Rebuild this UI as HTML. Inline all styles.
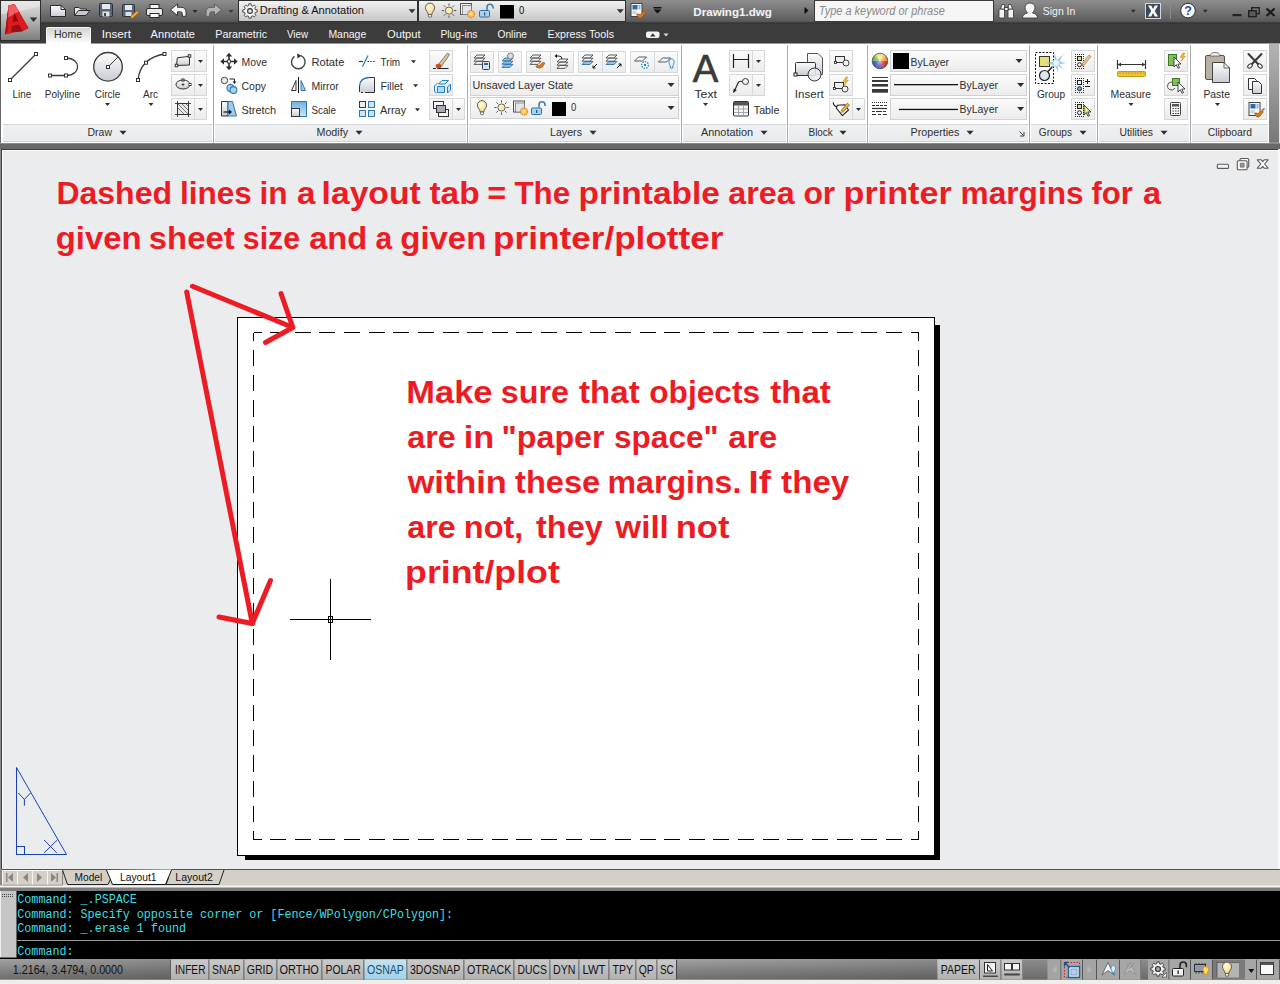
<!DOCTYPE html>
<html lang="en">
<head>
<meta charset="utf-8">
<title>Drawing1.dwg</title>
<style>
*{box-sizing:border-box;margin:0;padding:0}
html,body{width:1280px;height:984px;overflow:hidden;background:#ebecee}
body{position:relative;font-family:"Liberation Sans",sans-serif;font-size:11px;color:#333}
.abs{position:absolute}
#app{position:absolute;left:0;top:0;width:1280px;height:984px;overflow:hidden}
.t{position:absolute;white-space:nowrap;line-height:14px;height:14px;font-size:11px;color:#3a3a3a}
.tc{transform:translateX(-50%)}
svg{position:absolute;overflow:visible}
/* title */
#title{left:0;top:0;width:1280px;height:23px;background:linear-gradient(#747474 0,#6a6a6a 3px,#505050 14px,#3e3e3e 22px,#3c3c3c 23px)}
#tabs{left:0;top:23px;width:1280px;height:20px;background:#3c3c3c}
.tab{position:absolute;top:28px;color:#fff;font-size:11px;line-height:14px;white-space:nowrap}
#ribbon{left:0;top:43px;width:1280px;height:100px;background:#7c7c7c}
.panel{position:absolute;top:0;height:99px;background:#fff}
.plabel{position:absolute;left:0;right:0;top:81px;height:17px;background:linear-gradient(#eef0f2,#e6e8ea);border-top:1px solid #d9dbdd;border-bottom:1px solid #d9dbdd}
.sep{position:absolute;top:0;width:1px;height:99px;background:#b9bcc0}
.sb{position:absolute;border:1px solid #d3d5d8;background:linear-gradient(#fafafa,#ededee)}
.dd{position:absolute;border:1px solid #cfd1d4;background:linear-gradient(#f6f6f7,#ececed)}
.arr{position:absolute;width:0;height:0;border-left:3.5px solid transparent;border-right:3.5px solid transparent;border-top:4px solid #3a3a3a}
.arrs{position:absolute;width:0;height:0;border-left:3px solid transparent;border-right:3px solid transparent;border-top:3px solid #3a3a3a}
</style>
</head>
<body>
<div id="app">
<!-- TITLE BAR + RIBBON -->
<svg id="top" width="1280" height="149" viewBox="0 0 1280 149" style="left:0;top:0" font-family="'Liberation Sans',sans-serif">
<defs>
<linearGradient id="gt" x1="0" y1="0" x2="0" y2="1"><stop offset="0" stop-color="#8e8e8e"/><stop offset=".45" stop-color="#767676"/><stop offset=".88" stop-color="#5e5e5e"/><stop offset="1" stop-color="#4c4c4c"/></linearGradient>
<linearGradient id="gb" x1="0" y1="0" x2="0" y2="1"><stop offset="0" stop-color="#fbfbfb"/><stop offset="1" stop-color="#ececed"/></linearGradient>
<linearGradient id="gd" x1="0" y1="0" x2="0" y2="1"><stop offset="0" stop-color="#f3f3f3"/><stop offset="1" stop-color="#c6c6c6"/></linearGradient>
<linearGradient id="gl" x1="0" y1="0" x2="0" y2="1"><stop offset="0" stop-color="#eff0f2"/><stop offset="1" stop-color="#e9ebed"/></linearGradient>
<linearGradient id="gh" x1="0" y1="0" x2="0" y2="1"><stop offset="0" stop-color="#d2d2d2"/><stop offset="1" stop-color="#ffffff"/></linearGradient>
<linearGradient id="gapp" x1="0" y1="0" x2="0" y2="1"><stop offset="0" stop-color="#e4e4e4"/><stop offset=".45" stop-color="#b9b9b9"/><stop offset="1" stop-color="#7d7d7d"/></linearGradient>
<linearGradient id="gsh" x1="0" y1="0" x2="0" y2="1"><stop offset="0" stop-color="#fdfdfd"/><stop offset="1" stop-color="#c9ccd2"/></linearGradient>
<linearGradient id="gblue" x1="0" y1="0" x2="0" y2="1"><stop offset="0" stop-color="#6fb0dc"/><stop offset="1" stop-color="#cfe6f5"/></linearGradient>
<radialGradient id="gbulb" cx=".4" cy=".35" r=".7"><stop offset="0" stop-color="#fffbe0"/><stop offset="1" stop-color="#f3d679"/></radialGradient>
<radialGradient id="gsun" cx=".5" cy=".5" r=".6"><stop offset="0" stop-color="#fff2a8"/><stop offset="1" stop-color="#f39a1e"/></radialGradient>
</defs>
<rect x="0" y="0" width="1280" height="23" fill="url(#gt)"/>
<rect x="0" y="23" width="1280" height="21" fill="#3c3c3c"/>
<rect x="0" y="22.500" width="1280" height="1" fill="#303030"/>
<rect x="0" y="44" width="1280" height="99" fill="#fff"/>
<rect x="0" y="43" width="1280" height="1" fill="#9a9a9a"/>
<rect x="0" y="44" width="1" height="99" fill="#6a6a6a"/>
<rect x="1269" y="44" width="11" height="99" fill="#8e8e8e"/>
<rect x="0" y="143" width="1280" height="6" fill="#686868"/>
<rect x="0" y="143" width="1280" height="1" fill="#8a8a8a"/>
<rect x="0.5" y="0.5" width="40" height="40" fill="url(#gapp)" stroke="#2e2e2e"/>
<path d="M1 14 Q20 12 40 6 V1 H1 Z" fill="#ededed" opacity=".55"/>
<path d="M8.500 5.500 L14.500 4 L28.500 28 L22 31.500 L13 32.500 L5 34.500 Z" fill="#9c0e13"/>
<path d="M8.500 5.500 L14.500 4 L28.500 28 L22.300 30.800 L19.300 24.500 L12 26 L11.300 33 L5 34.500 Z" fill="#dc1a20"/>
<path d="M8.500 5.500 L14.500 4 L19 11.500 L8 17.500 Z" fill="#ee6064"/>
<path d="M14.300 12.500 L18.200 21 L12.600 22 Z" fill="#8e0b10"/>
<path d="M5 34.500 L7 19 L8.300 8 L8 31 Z" fill="#b01217"/>
<path d="M29.75 17.55 h7.5 l-3.75 4.5 z" fill="#2f2f2f"/>
<path d="M50.500 5.500 H61 L65.500 9.500 V16.500 H50.500 Z" fill="url(#gsh)" stroke="#2b2b2b"/><path d="M61 5.500 V9.500 H65.500" fill="none" stroke="#2b2b2b"/>
<path d="M74.500 15.500 V7.500 H79 L80.500 9 H86.500 V11" fill="#e8e8e8" stroke="#2b2b2b"/><path d="M74.500 15.500 L78.500 10.500 H90 L86 15.500 Z" fill="#c4c8d0" stroke="#2b2b2b"/>
<rect x="99.5" y="3.5" width="13" height="13" rx="1" fill="#5b6777" stroke="#2a323c"/><rect x="102" y="4" width="8" height="5" fill="#e6e9ee"/><rect x="102.5" y="11.500" width="7" height="5" fill="#dfe3e8"/><rect x="104" y="13" width="2" height="3" fill="#3a4552"/>
<rect x="122.5" y="4.500" width="12" height="12" rx="1" fill="#5b6777" stroke="#2a323c"/><rect x="125" y="5" width="7" height="5" fill="#e6e9ee"/><rect x="125.5" y="12" width="6" height="4" fill="#dfe3e8"/><path d="M130 17 L137 10.500 L139 12.500 L132.500 18.500 Z" fill="#f0a830" stroke="#7a4a10" stroke-width=".6"/>
<rect x="150" y="4.500" width="9" height="5" fill="#f4f4f4" stroke="#2b2b2b"/><rect x="146.500" y="8.500" width="16" height="7" rx="1.500" fill="#e9e9e9" stroke="#2b2b2b"/><rect x="150" y="13.500" width="9" height="4" fill="#fff" stroke="#2b2b2b"/>
<path d="M170.500 9.800 L177.500 4 V7.300 H181 Q186 7.300 186 12.500 V16.300 H182.300 V13.500 Q182.300 11.800 180.500 11.800 H177.500 V15.500 Z" fill="#f6f6f6" stroke="#2b2b2b" stroke-width=".9" stroke-linejoin="round"/>
<path d="M192.5 10.0 h5 l-2.5 3 z" fill="#2a2a2a"/>
<path d="M221.500 9.800 L214.500 4 V7.300 H211 Q206 7.300 206 12.500 V16.300 H209.700 V13.500 Q209.700 11.800 211.500 11.800 H214.500 V15.500 Z" fill="#b4b4b4" stroke="#585858" stroke-width=".9" stroke-linejoin="round"/>
<path d="M228.5 10.0 h5 l-2.5 3 z" fill="#3a3a3a"/>
<rect x="238.500" y="0.500" width="179" height="21" fill="url(#gd)" stroke="#2f2f2f"/>
<path d="M255.45 9.69 L257.21 9.86 L257.21 12.14 L255.45 12.31 L254.77 13.93 L255.91 15.29 L254.29 16.91 L252.93 15.77 L251.31 16.45 L251.14 18.21 L248.86 18.21 L248.69 16.45 L247.07 15.77 L245.71 16.91 L244.09 15.29 L245.23 13.93 L244.55 12.31 L242.79 12.14 L242.79 9.86 L244.55 9.69 L245.23 8.07 L244.09 6.71 L245.71 5.09 L247.07 6.23 L248.69 5.55 L248.86 3.79 L251.14 3.79 L251.31 5.55 L252.93 6.23 L254.29 5.09 L255.91 6.71 L254.77 8.07 Z" fill="#f6f6f6" stroke="#3a3a3a" stroke-width="0.9" stroke-linejoin="round"/><circle cx="250" cy="11" r="2.400" fill="#e2e2e2" stroke="#333" stroke-width="1.100"/>
<text x="259.7" y="14.1" textLength="104.3" lengthAdjust="spacingAndGlyphs" font-size="11" fill="#111" >Drafting &amp; Annotation</text>
<path d="M408.5 9.3 h7 l-3.5 4 z" fill="#333"/>
<rect x="418.500" y="0.500" width="207" height="21" fill="url(#gd)" stroke="#2f2f2f"/>
<path d="M428.2 14.5 C428.2 12 425.4 10.8 425.4 7.7 A4.600 4.600 0 1 1 434.6 7.7 C434.6 10.8 431.8 12 431.8 14.5 Z" fill="url(#gbulb)" stroke="#4f4f4f" stroke-width=".9"/><rect x="428.4" y="14.5" width="3.200" height="2.600" rx="1" fill="#f0f0f0" stroke="#444" stroke-width=".8"/>
<g stroke="#444" stroke-width=".9"><line x1="453.90" y1="10.60" x2="456.20" y2="10.60"/><line x1="452.46" y1="14.06" x2="454.09" y2="15.69"/><line x1="449.00" y1="15.50" x2="449.00" y2="17.80"/><line x1="445.54" y1="14.06" x2="443.91" y2="15.69"/><line x1="444.10" y1="10.60" x2="441.80" y2="10.60"/><line x1="445.54" y1="7.14" x2="443.91" y2="5.51"/><line x1="449.00" y1="5.70" x2="449.00" y2="3.40"/><line x1="452.46" y1="7.14" x2="454.09" y2="5.51"/></g><circle cx="449" cy="10.6" r="3.6" fill="#fdf0b0" stroke="#555" stroke-width=".9"/>
<rect x="460.5" y="3.5" width="11" height="11" fill="#f3f3f3" stroke="#555"/><rect x="462.5" y="5.5" width="9" height="9" fill="#e4e6ea" stroke="#777" stroke-width=".8"/><circle cx="471" cy="14" r="3.600" fill="url(#gsun)" stroke="#e8861a" stroke-width="1.200" stroke-dasharray="1.200 .9"/>
<path d="M487 10 v-2.800 a3 3 0 0 1 6 0 v1.200" fill="none" stroke="#3d7fb5" stroke-width="1.600"/><rect x="479.5" y="10.5" width="10" height="6.500" rx="1" fill="#a9d3ee" stroke="#2f6f9f"/><rect x="484" y="12.5" width="1.300" height="3" fill="#245a85"/>
<rect x="500" y="5" width="14" height="13.500" fill="#000"/>
<text x="519" y="14.1" textLength="5.3" lengthAdjust="spacingAndGlyphs" font-size="11" fill="#111" >0</text>
<path d="M616.8 9.3 h7 l-3.5 4 z" fill="#333"/>
<rect x="631.0" y="3.5" width="11" height="13" fill="#f7f7f7" stroke="#444"/><rect x="632.5" y="5" width="5" height="4.500" fill="#2f66b3"/><rect x="638.5" y="5" width="2" height="4.500" fill="#9ab4d6"/><rect x="632.5" y="11" width="4" height="3" fill="#c9d4e4"/><path d="M636.5 14 l4 .3 l3.500 -2.800 l1.500 1.200 l-3 3.800 q-2 2.500 -4 1.300 z" fill="#d97a1c" stroke="#8c4a0c" stroke-width=".6"/><path d="M644.0 11.5 l2.500 -2" stroke="#b5651d" stroke-width="1.600"/>
<rect x="653.500" y="7" width="8" height="1.500" fill="#111"/><path d="M653.5 9.5 h8 l-4.0 4 z" fill="#111"/>
<text x="693.3" y="16" textLength="78.6" lengthAdjust="spacingAndGlyphs" font-size="11" fill="#f4f4f4" font-weight="bold">Drawing1.dwg</text>
<path d="M804.500 7 L808.500 10.500 L804.500 14 Z" fill="#0c0c0c"/>
<rect x="814.500" y="0.500" width="179" height="21" fill="#f6f6f6" stroke="#3a3a3a"/>
<text x="818.8" y="15.4" textLength="126.0" lengthAdjust="spacingAndGlyphs" font-size="12" fill="#8a8a8a" font-style="italic">Type a keyword or phrase</text>
<g fill="#f2f2f2" stroke="#333" stroke-width=".8"><rect x="999" y="9" width="5.500" height="9" rx="1.200"/><rect x="1008" y="9" width="5.500" height="9" rx="1.200"/><path d="M1000.500 9 l1.500 -4.500 h2.500 l.5 4.500 z M1008 9 l.5 -4.500 h2.500 l1.500 4.500 z"/><rect x="1004.500" y="7.500" width="3.500" height="3" /></g>
<g fill="#f4f4f4" stroke="#333" stroke-width=".8"><path d="M1022.500 18 q0 -4 5 -5 l-1 -1.500 q-1.500 -1.500 -1.500 -4 a5 4.500 0 0 1 10 0 q0 2.500 -1.500 4 l-1 1.500 q5 1 5 5 z"/></g>
<text x="1042.8" y="14.5" textLength="32.5" lengthAdjust="spacingAndGlyphs" font-size="11" fill="#f2f2f2" >Sign In</text>
<path d="M1130.8 9.8 h5 l-2.5 3 z" fill="#2d2d2d"/>
<rect x="1145.500" y="3.500" width="15" height="15" fill="#3b4a5c" stroke="#d8d8d8"/><path d="M1148 5.500 h3.200 l1.800 3.500 l1.800 -3.500 h3.200 l-3.300 5.500 l3.300 5.500 h-3.200 l-1.800 -3.500 l-1.800 3.500 h-3.200 l3.300 -5.500 z" fill="#fff"/>
<rect x="1170" y="3" width="1" height="16" fill="#8a8a8a"/>
<circle cx="1188" cy="10.600" r="7.300" fill="#fafafa" stroke="#2d2d2d"/>
<text x="1188" y="15" text-anchor="middle" font-size="12.500" font-weight="bold" fill="#1e4fa8">?</text>
<path d="M1202.8 9.8 h5 l-2.5 3 z" fill="#2d2d2d"/>
<rect x="1232.500" y="14" width="9" height="2.200" fill="#222"/>
<g fill="none" stroke="#222" stroke-width="1.400"><rect x="1251.700" y="7.700" width="7.500" height="6"/><rect x="1248.700" y="10.700" width="7.500" height="6" fill="#5a5a5a"/></g>
<path d="M1266.500 8.500 L1274.500 16 M1274.500 8.500 L1266.500 16" stroke="#1d1d1d" stroke-width="2.300" fill="none"/>
<path d="M46 44 V29 Q46 27 48 27 H89 Q91 27 91 29 V44 Z" fill="url(#gh)"/><path d="M46.500 43.500 V29 Q46.500 27.500 48 27.500 H89 Q90.500 27.500 90.500 29 V43.500" fill="none" stroke="#f6f6f6" stroke-width="1"/>
<text x="54" y="37.5" textLength="28" lengthAdjust="spacingAndGlyphs" font-size="11" fill="#2c2c2c" >Home</text>
<text x="101.7" y="37.5" textLength="29.3" lengthAdjust="spacingAndGlyphs" font-size="11" fill="#f6f6f6" >Insert</text>
<text x="150.6" y="37.5" textLength="44.4" lengthAdjust="spacingAndGlyphs" font-size="11" fill="#f6f6f6" >Annotate</text>
<text x="215.3" y="37.5" textLength="51.7" lengthAdjust="spacingAndGlyphs" font-size="11" fill="#f6f6f6" >Parametric</text>
<text x="287" y="37.5" textLength="21" lengthAdjust="spacingAndGlyphs" font-size="11" fill="#f6f6f6" >View</text>
<text x="328.4" y="37.5" textLength="37.9" lengthAdjust="spacingAndGlyphs" font-size="11" fill="#f6f6f6" >Manage</text>
<text x="387" y="37.5" textLength="33.6" lengthAdjust="spacingAndGlyphs" font-size="11" fill="#f6f6f6" >Output</text>
<text x="440.5" y="37.5" textLength="37.0" lengthAdjust="spacingAndGlyphs" font-size="11" fill="#f6f6f6" >Plug-ins</text>
<text x="497.5" y="37.5" textLength="29.5" lengthAdjust="spacingAndGlyphs" font-size="11" fill="#f6f6f6" >Online</text>
<text x="547.5" y="37.5" textLength="66.5" lengthAdjust="spacingAndGlyphs" font-size="11" fill="#f6f6f6" >Express Tools</text>
<rect x="646" y="31.500" width="13.500" height="6.500" rx="2" fill="#f2f2f2"/><path d="M650 36.500 l2.800 -3.200 l2.800 3.200 z" fill="#333"/>
<path d="M663.5 33.5 h5 l-2.5 3 z" fill="#dcdcdc"/>
<!-- RIBBON PANELS -->
<rect x="3" y="124" width="209" height="17.500" fill="url(#gl)"/>
<rect x="3" y="124" width="209" height="1" fill="#d4d6d9"/>
<rect x="3" y="141" width="209" height="1" fill="#d0d2d5"/>
<rect x="215" y="124" width="251" height="17.500" fill="url(#gl)"/>
<rect x="215" y="124" width="251" height="1" fill="#d4d6d9"/>
<rect x="215" y="141" width="251" height="1" fill="#d0d2d5"/>
<rect x="469" y="124" width="211" height="17.500" fill="url(#gl)"/>
<rect x="469" y="124" width="211" height="1" fill="#d4d6d9"/>
<rect x="469" y="141" width="211" height="1" fill="#d0d2d5"/>
<rect x="683" y="124" width="103" height="17.500" fill="url(#gl)"/>
<rect x="683" y="124" width="103" height="1" fill="#d4d6d9"/>
<rect x="683" y="141" width="103" height="1" fill="#d0d2d5"/>
<rect x="789" y="124" width="77" height="17.500" fill="url(#gl)"/>
<rect x="789" y="124" width="77" height="1" fill="#d4d6d9"/>
<rect x="789" y="141" width="77" height="1" fill="#d0d2d5"/>
<rect x="869" y="124" width="159" height="17.500" fill="url(#gl)"/>
<rect x="869" y="124" width="159" height="1" fill="#d4d6d9"/>
<rect x="869" y="141" width="159" height="1" fill="#d0d2d5"/>
<rect x="1031" y="124" width="65" height="17.500" fill="url(#gl)"/>
<rect x="1031" y="124" width="65" height="1" fill="#d4d6d9"/>
<rect x="1031" y="141" width="65" height="1" fill="#d0d2d5"/>
<rect x="1099" y="124" width="90" height="17.500" fill="url(#gl)"/>
<rect x="1099" y="124" width="90" height="1" fill="#d4d6d9"/>
<rect x="1099" y="141" width="90" height="1" fill="#d0d2d5"/>
<rect x="1192" y="124" width="76" height="17.500" fill="url(#gl)"/>
<rect x="1192" y="124" width="76" height="1" fill="#d4d6d9"/>
<rect x="1192" y="141" width="76" height="1" fill="#d0d2d5"/>
<rect x="213" y="45" width="1" height="98" fill="#a9acb0"/>
<rect x="467" y="45" width="1" height="98" fill="#a9acb0"/>
<rect x="681" y="45" width="1" height="98" fill="#a9acb0"/>
<rect x="787" y="45" width="1" height="98" fill="#a9acb0"/>
<rect x="867" y="45" width="1" height="98" fill="#a9acb0"/>
<rect x="1029" y="45" width="1" height="98" fill="#a9acb0"/>
<rect x="1097" y="45" width="1" height="98" fill="#a9acb0"/>
<rect x="1190" y="45" width="1" height="98" fill="#a9acb0"/>
<defs><linearGradient id="grs" x1="0" y1="0" x2="0" y2="1"><stop offset="0" stop-color="#b4b4b4"/><stop offset="1" stop-color="#787878"/></linearGradient></defs><rect x="1269" y="44" width="10" height="98" fill="url(#grs)"/><rect x="1279" y="44" width="1" height="99" fill="#e8e8e8"/>
<text x="87.5" y="135.7" textLength="24.5" lengthAdjust="spacingAndGlyphs" font-size="11" fill="#2e2e2e" >Draw</text>
<path d="M119.5 130.7 h7 l-3.5 4 z" fill="#2e2e2e"/>
<text x="316.5" y="135.7" textLength="31.5" lengthAdjust="spacingAndGlyphs" font-size="11" fill="#2e2e2e" >Modify</text>
<path d="M355.5 130.7 h7 l-3.5 4 z" fill="#2e2e2e"/>
<text x="550" y="135.7" textLength="32" lengthAdjust="spacingAndGlyphs" font-size="11" fill="#2e2e2e" >Layers</text>
<path d="M589.5 130.7 h7 l-3.5 4 z" fill="#2e2e2e"/>
<text x="701" y="135.7" textLength="52" lengthAdjust="spacingAndGlyphs" font-size="11" fill="#2e2e2e" >Annotation</text>
<path d="M760.5 130.7 h7 l-3.5 4 z" fill="#2e2e2e"/>
<text x="808.5" y="135.7" textLength="24.3" lengthAdjust="spacingAndGlyphs" font-size="11" fill="#2e2e2e" >Block</text>
<path d="M839.5 130.7 h7 l-3.5 4 z" fill="#2e2e2e"/>
<text x="910.6" y="135.7" textLength="48.8" lengthAdjust="spacingAndGlyphs" font-size="11" fill="#2e2e2e" >Properties</text>
<path d="M966.5 130.7 h7 l-3.5 4 z" fill="#2e2e2e"/>
<text x="1038.8" y="135.7" textLength="33.2" lengthAdjust="spacingAndGlyphs" font-size="11" fill="#2e2e2e" >Groups</text>
<path d="M1079.5 130.7 h7 l-3.5 4 z" fill="#2e2e2e"/>
<text x="1119.4" y="135.7" textLength="33.6" lengthAdjust="spacingAndGlyphs" font-size="11" fill="#2e2e2e" >Utilities</text>
<path d="M1160.5 130.7 h7 l-3.5 4 z" fill="#2e2e2e"/>
<text x="1207.8" y="135.7" textLength="44.2" lengthAdjust="spacingAndGlyphs" font-size="11" fill="#2e2e2e" >Clipboard</text>
<path d="M1019.500 131.500 L1023.500 135.500 M1024 132 V136 H1020" stroke="#444" fill="none" stroke-width="1"/>
<line x1="10" y1="80" x2="36" y2="54" stroke="#3a3a3a" stroke-width="1.300"/><rect x="8.5" y="78.5" width="3" height="3" fill="#fff" stroke="#333" stroke-width="1"/><rect x="34.5" y="52.5" width="3" height="3" fill="#fff" stroke="#333" stroke-width="1"/>
<text x="12.5" y="97.7" textLength="18.7" lengthAdjust="spacingAndGlyphs" font-size="11" fill="#2e2e2e" >Line</text>
<path d="M50 75.500 H66 C81.500 75.500 81.500 58 66 58" fill="none" stroke="#3a3a3a" stroke-width="1.300"/><rect x="48.5" y="74.0" width="3" height="3" fill="#fff" stroke="#333" stroke-width="1"/><rect x="64.5" y="74.0" width="3" height="3" fill="#fff" stroke="#333" stroke-width="1"/><rect x="64.5" y="56.5" width="3" height="3" fill="#fff" stroke="#333" stroke-width="1"/>
<text x="44.8" y="97.7" textLength="35.2" lengthAdjust="spacingAndGlyphs" font-size="11" fill="#2e2e2e" >Polyline</text>
<circle cx="108" cy="66.800" r="14.300" fill="url(#gsh)" stroke="#3a3a3a" stroke-width="1.300"/><line x1="108" y1="67" x2="118" y2="57" stroke="#3a3a3a" stroke-width="1"/><rect x="106.5" y="65.5" width="3" height="3" fill="#fff" stroke="#333" stroke-width="1"/>
<text x="94.8" y="97.7" textLength="25.4" lengthAdjust="spacingAndGlyphs" font-size="11" fill="#2e2e2e" >Circle</text>
<path d="M105.0 103.0 h5 l-2.5 3 z" fill="#2e2e2e"/>
<path d="M138 80 Q140.500 58 164.500 54" fill="none" stroke="#3a3a3a" stroke-width="1.300"/><rect x="136.5" y="78.5" width="3" height="3" fill="#fff" stroke="#333" stroke-width="1"/><rect x="144.5" y="61.2" width="3" height="3" fill="#fff" stroke="#333" stroke-width="1"/><rect x="163.0" y="52.5" width="3" height="3" fill="#fff" stroke="#333" stroke-width="1"/>
<text x="143" y="97.7" textLength="15" lengthAdjust="spacingAndGlyphs" font-size="11" fill="#2e2e2e" >Arc</text>
<path d="M148.5 103.0 h5 l-2.5 3 z" fill="#2e2e2e"/>
<rect x="171.5" y="50.5" width="35" height="21" fill="url(#gb)" stroke="#d6d8da"/>
<rect x="194" y="51" width="1" height="20" fill="#d6d8da"/>
<path d="M198.0 60.0 h5 l-2.5 3 z" fill="#2e2e2e"/>
<rect x="171.5" y="74.5" width="35" height="21" fill="url(#gb)" stroke="#d6d8da"/>
<rect x="194" y="75" width="1" height="20" fill="#d6d8da"/>
<path d="M198.0 84.0 h5 l-2.5 3 z" fill="#2e2e2e"/>
<rect x="171.5" y="98.5" width="35" height="21" fill="url(#gb)" stroke="#d6d8da"/>
<rect x="194" y="99" width="1" height="20" fill="#d6d8da"/>
<path d="M198.0 108.0 h5 l-2.5 3 z" fill="#2e2e2e"/>
<path d="M176.500 65.500 L177.300 57.800 L189.500 56.300 L189.500 65 Z" fill="url(#gsh)" stroke="#333"/><rect x="175.25" y="64.25" width="2.5" height="2.5" fill="#fff" stroke="#333" stroke-width="1"/><rect x="188.25" y="54.75" width="2.5" height="2.5" fill="#fff" stroke="#333" stroke-width="1"/>
<ellipse cx="183" cy="84.500" rx="7" ry="4.500" fill="url(#gsh)" stroke="#333"/><rect x="182.0" y="79.0" width="2" height="2" fill="#fff" stroke="#333" stroke-width="1"/><rect x="189.0" y="83.5" width="2" height="2" fill="#fff" stroke="#333" stroke-width="1"/><path d="M181.500 84.500 h3 M183 83 v3" stroke="#333" stroke-width=".8"/>
<rect x="177.500" y="103.500" width="11" height="11" fill="#e9e9e9" stroke="#333"/><path d="M178 108 l6 6 M178 104 l10 10 M182 104 l6 6 M186 104 l2 2" stroke="#555" stroke-width=".8"/><path d="M175 103.500 h16 M175 114.500 h16 M177.500 101 v16 M188.500 101 v16" stroke="#333" stroke-width=".9"/>
<g stroke="#2e2e2e" stroke-width="1.600" fill="#2e2e2e"><path d="M222 61.500 H236 M229 54.500 V68.500" fill="none"/><path d="M229 52.800 l-3.200 3.700 h6.400 z M229 70.200 l-3.200 -3.700 h6.400 z M220.300 61.500 l3.700 -3.200 v6.400 z M237.700 61.500 l-3.700 -3.200 v6.400 z" stroke="none"/></g><rect x="227.500" y="60" width="3" height="3" fill="#fff" stroke="#333" stroke-width=".8"/>
<text x="241.5" y="65.7" textLength="25.5" lengthAdjust="spacingAndGlyphs" font-size="11" fill="#2e2e2e" >Move</text>
<circle cx="224.500" cy="80.500" r="3.200" fill="#eee" stroke="#444"/><path d="M229.500 79 h5 v3" fill="none" stroke="#222"/><path d="M234.500 84 l-2 -2.500 h4 z" fill="#222"/><circle cx="230.500" cy="88" r="3.600" fill="#a9cfe9" stroke="#2f78b3" stroke-width="1.100"/><circle cx="233.500" cy="90" r="3.400" fill="#a9cfe9" stroke="#2f78b3" stroke-width="1.100"/>
<text x="241.5" y="89.7" textLength="24.5" lengthAdjust="spacingAndGlyphs" font-size="11" fill="#2e2e2e" >Copy</text>
<path d="M221.500 101.500 H228 V116 H221.500 Z" fill="url(#gsh)" stroke="#333"/><path d="M228 101.500 H232.500 L236.500 116 H228 Z" fill="#9fcbe8" stroke="#2f78b3"/><path d="M223.500 112 h6" stroke="#111" stroke-width="1.200"/><path d="M232 112 l-3 -2.500 v5 z" fill="#111"/>
<text x="241.5" y="113.7" textLength="34.7" lengthAdjust="spacingAndGlyphs" font-size="11" fill="#2e2e2e" >Stretch</text>
<path d="M301 55.700 A6.800 6.800 0 1 1 294.500 56.300" fill="none" stroke="#444" stroke-width="1.400"/><path d="M297 53.500 l4.500 2.300 l-4 2.800 z" fill="#333"/>
<text x="311.5" y="65.7" textLength="32.9" lengthAdjust="spacingAndGlyphs" font-size="11" fill="#2e2e2e" >Rotate</text>
<path d="M296 90.500 H291.500 L296 80.500 Z" fill="#f3f3f3" stroke="#333"/><path d="M301 90.500 H305.500 L301 80.500 Z" fill="#9fcbe8" stroke="#2f78b3"/><path d="M298.500 77 V93" stroke="#111" stroke-width="1"/>
<text x="311.5" y="89.7" textLength="27.3" lengthAdjust="spacingAndGlyphs" font-size="11" fill="#2e2e2e" >Mirror</text>
<rect x="291.500" y="101.500" width="15" height="15" fill="url(#gblue)" stroke="#2f78b3"/><rect x="291.500" y="108.500" width="8" height="8" fill="url(#gsh)" stroke="#333"/>
<text x="311.5" y="113.7" textLength="24.5" lengthAdjust="spacingAndGlyphs" font-size="11" fill="#2e2e2e" >Scale</text>
<path d="M359 61.500 h4" stroke="#333" stroke-width="1.100"/><path d="M367.500 61.500 h8" stroke="#333" stroke-width="1.100" stroke-dasharray="1.500 1.300"/><path d="M362.500 66.500 L368 55.500" stroke="#2f78b3" stroke-width="1.300"/>
<text x="380.6" y="65.7" textLength="19.6" lengthAdjust="spacingAndGlyphs" font-size="11" fill="#2e2e2e" >Trim</text>
<path d="M411.0 60.3 h5 l-2.5 3 z" fill="#2e2e2e"/>
<path d="M359.500 92.500 V86 Q360 78 369 77.500 H374.500 V92.500 Z" fill="url(#gsh)" stroke="none"/><path d="M359.500 86 Q360 78 369 77.500" fill="none" stroke="#2f78b3" stroke-width="1.300"/><path d="M369 77.500 H374.500 V92.500 H359.500 V86" fill="none" stroke="#333" stroke-dasharray="30 2 2 2"/>
<text x="380.6" y="89.7" textLength="22.2" lengthAdjust="spacingAndGlyphs" font-size="11" fill="#2e2e2e" >Fillet</text>
<path d="M413.1 84.3 h5 l-2.5 3 z" fill="#2e2e2e"/>
<rect x="359.5" y="101.5" width="6" height="6" fill="#ececec" stroke="#3a3a3a"/>
<rect x="368.5" y="101.5" width="6" height="6" fill="#cfe4f3" stroke="#2f78b3"/>
<rect x="359.5" y="110.5" width="6" height="6" fill="#cfe4f3" stroke="#2f78b3"/>
<rect x="368.5" y="110.5" width="6" height="6" fill="#cfe4f3" stroke="#2f78b3"/>
<text x="380" y="113.7" textLength="26.2" lengthAdjust="spacingAndGlyphs" font-size="11" fill="#2e2e2e" >Array</text>
<path d="M415.0 108.3 h5 l-2.5 3 z" fill="#2e2e2e"/>
<rect x="429.5" y="50.5" width="23" height="21" fill="url(#gb)" stroke="#d6d8da"/>
<rect x="429.5" y="74.5" width="23" height="21" fill="url(#gb)" stroke="#d6d8da"/>
<rect x="429.5" y="98.5" width="35" height="21" fill="url(#gb)" stroke="#d6d8da"/>
<rect x="452" y="99" width="1" height="20" fill="#d6d8da"/>
<path d="M456.0 108.0 h5 l-2.5 3 z" fill="#2e2e2e"/>
<path d="M438 65 L447.500 53 L449.500 54.500 L441 67 Z" fill="#d8c39a" stroke="#6a5638" stroke-width=".7"/><ellipse cx="438.500" cy="66" rx="2.800" ry="2.300" fill="#c7501a"/><path d="M433 68.500 h3 M437.500 68.500 h11" stroke="#222" stroke-width="1"/>
<g stroke="#1f7fc8" stroke-width="1" stroke-linejoin="round"><path d="M434.500 91.500 v-5.500 l3 -3" fill="none"/><path d="M438.500 84 l3.500 -3.500 h6.500 l-3.500 3.500 z" fill="#e4f2fb"/><path d="M447.500 87 l3 -3 v6 l-3 3 z" fill="#cfe7f7"/><rect x="437.500" y="86.500" width="7" height="6" fill="#b5dbf3"/><path d="M434.500 91.500 l2 1.500" fill="none"/></g>
<rect x="433.500" y="101.500" width="10" height="7" fill="#f8f8f8" stroke="#333"/><rect x="438.500" y="109.500" width="10" height="7" fill="#f8f8f8" stroke="#333"/><rect x="436.500" y="105.500" width="9" height="7" fill="#a9adb3" stroke="#333"/>
<rect x="470.5" y="51.5" width="23" height="21" fill="url(#gb)" stroke="#d6d8da"/>
<rect x="498.5" y="51.5" width="23" height="21" fill="url(#gb)" stroke="#d6d8da"/>
<rect x="526.5" y="51.5" width="47" height="21" fill="url(#gb)" stroke="#d6d8da"/>
<rect x="578.5" y="51.5" width="47" height="21" fill="url(#gb)" stroke="#d6d8da"/>
<rect x="630.5" y="51.5" width="47" height="21" fill="url(#gb)" stroke="#d6d8da"/>
<rect x="550" y="51" width="1" height="21" fill="#d6d8da"/>
<rect x="602" y="51" width="1" height="21" fill="#d6d8da"/>
<rect x="654" y="51" width="1" height="21" fill="#d6d8da"/>
<path d="M474 58.0 l3 -3 h8 l-3 3 z" fill="#f4f4f4" stroke="#333" stroke-width=".8"/><path d="M474 61.2 l3 -3 h8 l-3 3 z" fill="#f4f4f4" stroke="#333" stroke-width=".8"/><path d="M474 64.4 l3 -3 h8 l-3 3 z" fill="#f4f4f4" stroke="#333" stroke-width=".8"/><rect x="482.500" y="61.500" width="7" height="8" rx="1" fill="#dbe7f3" stroke="#2a3f5c"/><rect x="484" y="63" width="4" height="2" fill="#2f66b3"/>
<path d="M502 61.0 l3 -3 h8 l-3 3 z" fill="#8cc3e8" stroke="#1d5f9c" stroke-width=".8"/><path d="M502 64.2 l3 -3 h8 l-3 3 z" fill="#8cc3e8" stroke="#1d5f9c" stroke-width=".8"/><path d="M502 67.4 l3 -3 h8 l-3 3 z" fill="#8cc3e8" stroke="#1d5f9c" stroke-width=".8"/><circle cx="510.500" cy="56" r="3" fill="#d8dde3" stroke="#666" stroke-width=".8"/>
<path d="M530 58.0 l3 -3 h8 l-3 3 z" fill="#f4f4f4" stroke="#333" stroke-width=".8"/><path d="M530 61.2 l3 -3 h8 l-3 3 z" fill="#f4f4f4" stroke="#333" stroke-width=".8"/><path d="M530 64.4 l3 -3 h8 l-3 3 z" fill="#f4f4f4" stroke="#333" stroke-width=".8"/><path d="M536 66 l4 -1 l3 -3 l2 1 l-2.500 4 q-3 2.500 -6.500 0 z" fill="#d97a1c" stroke="#8c4a0c" stroke-width=".5"/>
<path d="M557 62.0 l3 -3 h8 l-3 3 z" fill="#f4f4f4" stroke="#333" stroke-width=".8"/><path d="M557 65.2 l3 -3 h8 l-3 3 z" fill="#f4f4f4" stroke="#333" stroke-width=".8"/><path d="M557 68.4 l3 -3 h8 l-3 3 z" fill="#f4f4f4" stroke="#333" stroke-width=".8"/><path d="M556 56 h3 q3 0 3 3" fill="none" stroke="#111" stroke-width=".9"/><path d="M554.500 56 l2.500 -2 v4 z" fill="#111"/>
<path d="M582 58.0 l3 -3 h8 l-3 3 z" fill="#f8f8f8" stroke="#333" stroke-width=".8"/><path d="M582 61.2 l3 -3 h8 l-3 3 z" fill="#f8f8f8" stroke="#333" stroke-width=".8"/><path d="M582 64.500 l3 -3 h8 l-3 3 z" fill="#8cc3e8" stroke="#1d5f9c" stroke-width=".8"/><path d="M597 64 l-4 4 M593 65.500 v2.500 h2.500" stroke="#111" fill="none" stroke-width="1"/>
<path d="M606 58.0 l3 -3 h8 l-3 3 z" fill="#f8f8f8" stroke="#333" stroke-width=".8"/><path d="M606 61.2 l3 -3 h8 l-3 3 z" fill="#f8f8f8" stroke="#333" stroke-width=".8"/><path d="M606 64.500 l3 -3 h8 l-3 3 z" fill="#8cc3e8" stroke="#1d5f9c" stroke-width=".8"/><path d="M617 68 l4 -4 M618.500 64 h2.500 v2.500" stroke="#111" fill="none" stroke-width="1"/>
<path d="M634.500 61 l4 -4 h8 l-4 4 z" fill="#f8f8f8" stroke="#333" stroke-width=".8"/><circle cx="645" cy="65" r="3.300" fill="#fff" stroke="#2b7ec0" stroke-width="1.300" stroke-dasharray="1.500 1"/><circle cx="645" cy="65" r="1.200" fill="#2b7ec0"/>
<path d="M658.500 62 l4 -4 h8 l-4 4 z" fill="#f8f8f8" stroke="#333" stroke-width=".8"/><path d="M669 62.500 a2.600 2.800 0 1 1 5 0 q0 2 -1.200 3 v2.500 h-2.600 v-2.500 q-1.200 -1 -1.200 -3 z" fill="#e7f2fb" stroke="#2b7ec0" stroke-width=".9"/>
<rect x="470.5" y="75.5" width="208" height="20" fill="url(#gb)" stroke="#cfd1d4"/>
<text x="472.5" y="88.6" textLength="100.5" lengthAdjust="spacingAndGlyphs" font-size="11" fill="#2e2e2e" >Unsaved Layer State</text>
<path d="M667.5 83.0 h7 l-3.5 4 z" fill="#2e2e2e"/>
<rect x="470.5" y="97.5" width="208" height="21" fill="url(#gb)" stroke="#cfd1d4"/>
<path d="M480.2 112.0 C480.2 109.5 477.4 108.3 477.4 105.2 A4.600 4.600 0 1 1 486.6 105.2 C486.6 108.3 483.8 109.5 483.8 112.0 Z" fill="url(#gbulb)" stroke="#4f4f4f" stroke-width=".9"/><rect x="480.4" y="112.0" width="3.200" height="2.600" rx="1" fill="#f0f0f0" stroke="#444" stroke-width=".8"/>
<g stroke="#444" stroke-width=".9"><line x1="506.40" y1="107.50" x2="508.70" y2="107.50"/><line x1="504.96" y1="110.96" x2="506.59" y2="112.59"/><line x1="501.50" y1="112.40" x2="501.50" y2="114.70"/><line x1="498.04" y1="110.96" x2="496.41" y2="112.59"/><line x1="496.60" y1="107.50" x2="494.30" y2="107.50"/><line x1="498.04" y1="104.04" x2="496.41" y2="102.41"/><line x1="501.50" y1="102.60" x2="501.50" y2="100.30"/><line x1="504.96" y1="104.04" x2="506.59" y2="102.41"/></g><circle cx="501.5" cy="107.5" r="3.6" fill="#fdf0b0" stroke="#555" stroke-width=".9"/>
<rect x="513.5" y="101.0" width="11" height="11" fill="#f3f3f3" stroke="#555"/><rect x="515.5" y="103.0" width="9" height="9" fill="#e4e6ea" stroke="#777" stroke-width=".8"/><circle cx="524" cy="111.5" r="3.600" fill="url(#gsun)" stroke="#e8861a" stroke-width="1.200" stroke-dasharray="1.200 .9"/>
<path d="M539 107.5 v-2.800 a3 3 0 0 1 6 0 v1.200" fill="none" stroke="#3d7fb5" stroke-width="1.600"/><rect x="531.5" y="108.0" width="10" height="6.500" rx="1" fill="#a9d3ee" stroke="#2f6f9f"/><rect x="536" y="110.0" width="1.300" height="3" fill="#245a85"/>
<rect x="552" y="102" width="14" height="14" fill="#000"/>
<text x="571" y="110.8" textLength="5.3" lengthAdjust="spacingAndGlyphs" font-size="11" fill="#2e2e2e" >0</text>
<path d="M667.5 106.0 h7 l-3.5 4 z" fill="#2e2e2e"/>
<text x="705.500" y="82" text-anchor="middle" font-size="38" fill="#3a3a3a" stroke="#3a3a3a" stroke-width=".7" textLength="25.500" lengthAdjust="spacingAndGlyphs">A</text>
<text x="694.4" y="97.7" textLength="22.6" lengthAdjust="spacingAndGlyphs" font-size="11" fill="#2e2e2e" >Text</text>
<path d="M703.0 103.0 h5 l-2.5 3 z" fill="#2e2e2e"/>
<rect x="729.5" y="50.5" width="35" height="21" fill="url(#gb)" stroke="#d6d8da"/>
<rect x="752" y="51" width="1" height="20" fill="#d6d8da"/>
<path d="M756.0 60.0 h5 l-2.5 3 z" fill="#2e2e2e"/>
<rect x="729.5" y="74.5" width="35" height="21" fill="url(#gb)" stroke="#d6d8da"/>
<rect x="752" y="75" width="1" height="20" fill="#d6d8da"/>
<path d="M756.0 84.0 h5 l-2.5 3 z" fill="#2e2e2e"/>
<path d="M733.500 54 V68 M748.500 54 V68 M733.500 59.500 H748.500" stroke="#222" stroke-width="1.200" fill="none"/>
<path d="M734 92 L737.500 84 Q739 80.500 742.500 81.500" fill="none" stroke="#222" stroke-width="1.100"/><path d="M733 93 l.8 -4.500 l3 1.800 z" fill="#222"/><circle cx="745.500" cy="81.500" r="3" fill="#f4f4f4" stroke="#333"/>
<rect x="733.500" y="101.500" width="15" height="14.500" rx="1" fill="#f4f4f4" stroke="#333"/><rect x="734" y="102" width="14" height="3.500" fill="#555"/><path d="M738.500 105.500 V116 M743.500 105.500 V116 M734 109 H748 M734 112.500 H748" stroke="#9aa0a8" stroke-width=".9"/>
<text x="753.8" y="113.7" textLength="25.6" lengthAdjust="spacingAndGlyphs" font-size="11" fill="#2e2e2e" >Table</text>
<path d="M807.500 53.500 H818 L822.500 58 V74.500 H807.500 Z" fill="url(#gsh)" stroke="#555"/><rect x="795.500" y="62.500" width="20" height="13" rx="1" fill="url(#gsh)" stroke="#333"/><circle cx="814.500" cy="74.500" r="6.500" fill="#e9ebee" fill-opacity=".85" stroke="#333"/><rect x="794" y="73" width="3" height="3" fill="#fff" stroke="#222"/>
<text x="794.8" y="97.7" textLength="29.0" lengthAdjust="spacingAndGlyphs" font-size="11" fill="#2e2e2e" >Insert</text>
<rect x="829.5" y="50.5" width="23" height="21" fill="url(#gb)" stroke="#d6d8da"/>
<rect x="829.5" y="74.5" width="23" height="21" fill="url(#gb)" stroke="#d6d8da"/>
<rect x="829.5" y="98.5" width="35" height="21" fill="url(#gb)" stroke="#d6d8da"/>
<rect x="852" y="99" width="1" height="20" fill="#d6d8da"/>
<path d="M856.0 108.0 h5 l-2.5 3 z" fill="#2e2e2e"/>
<rect x="835.5" y="56.5" width="9" height="6" fill="#eceef1" stroke="#333"/><circle cx="846" cy="63" r="3" fill="#eef0f3" stroke="#333" stroke-width=".9"/><rect x="834.5" y="61.5" width="2" height="2" fill="#fff" stroke="#222" stroke-width=".8"/>
<rect x="834.5" y="82.5" width="9" height="6" fill="#eceef1" stroke="#333"/><circle cx="845" cy="89" r="3" fill="#eef0f3" stroke="#333" stroke-width=".9"/><rect x="833.5" y="87.5" width="2" height="2" fill="#fff" stroke="#222" stroke-width=".8"/><path d="M846 77 l-3 4.500 h2.500 l-1.500 4 l4.500 -5.500 h-2.500 l2 -3 z" fill="#f4b52a" stroke="#c07a10" stroke-width=".4"/>
<path d="M833.200 102.300 q.3 4 3.800 4.500" fill="none" stroke="#222" stroke-width="1.100"/><path d="M837.500 105.200 L845 104.800 L848.500 110 L842.400 115.600 L836.300 108 Z" fill="#fafafa" stroke="#222" stroke-width="1.100" stroke-linejoin="round"/><path d="M841.300 110.300 L847.300 103.300 L849.500 105 L843.300 112 Z" fill="#f2b134" stroke="#6a4a10" stroke-width=".6"/><path d="M841.300 110.300 L843.300 112 L840.600 113 Z" fill="#f6e2b8" stroke="#6a4a10" stroke-width=".4"/>
<defs><radialGradient id="gwh" cx=".5" cy=".5" r=".5"><stop offset="0" stop-color="#fff" stop-opacity=".55"/><stop offset=".6" stop-color="#fff" stop-opacity=".1"/><stop offset="1" stop-color="#000" stop-opacity=".15"/></radialGradient></defs><path d="M880 61 L887.80 61.00 A7.8 7.8 0 0 1 883.90 67.75 Z" fill="#e0301f"/><path d="M880 61 L883.90 67.75 A7.8 7.8 0 0 1 876.10 67.75 Z" fill="#8f4fc2"/><path d="M880 61 L876.10 67.75 A7.8 7.8 0 0 1 872.20 61.00 Z" fill="#2f62d2"/><path d="M880 61 L872.20 61.00 A7.8 7.8 0 0 1 876.10 54.25 Z" fill="#76bf43"/><path d="M880 61 L876.10 54.25 A7.8 7.8 0 0 1 883.90 54.25 Z" fill="#efe04e"/><path d="M880 61 L883.90 54.25 A7.8 7.8 0 0 1 887.80 61.00 Z" fill="#f0a02e"/><circle cx="880" cy="61" r="7.800" fill="url(#gwh)" stroke="#5a5a6a" stroke-width=".9"/><ellipse cx="880" cy="56.500" rx="5.500" ry="2.800" fill="#fff" opacity=".35"/>
<rect x="890.5" y="50.5" width="136" height="21" fill="url(#gb)" stroke="#cfd1d4"/>
<rect x="893" y="53" width="16" height="16" fill="#000"/>
<text x="910.6" y="65.7" textLength="38.4" lengthAdjust="spacingAndGlyphs" font-size="11" fill="#2e2e2e" >ByLayer</text>
<path d="M1015.5 59.0 h7 l-3.5 4 z" fill="#2e2e2e"/>
<rect x="872" y="77" width="16" height="1" fill="#3a3a3a"/><rect x="872" y="80" width="16" height="2" fill="#3a3a3a"/><rect x="872" y="84" width="16" height="2.600" fill="#3a3a3a"/><rect x="872" y="89" width="16" height="3.700" fill="#3a3a3a"/>
<rect x="890.5" y="74.5" width="136" height="21" fill="url(#gb)" stroke="#cfd1d4"/>
<rect x="894" y="84" width="64" height="1.300" fill="#111"/>
<text x="959.4" y="89" textLength="38.6" lengthAdjust="spacingAndGlyphs" font-size="11" fill="#2e2e2e" >ByLayer</text>
<path d="M1017.1 83.0 h7 l-3.5 4 z" fill="#2e2e2e"/>
<g stroke="#333" stroke-width="1.200"><path d="M872 102.500 h15" stroke-dasharray="1 1"/><path d="M872 105.500 h15" stroke-dasharray="3 1"/><path d="M872 108.500 h15"/><path d="M872 111.500 h15" stroke-dasharray="3 1 6 1 3 1"/><path d="M872 114.500 h15" stroke-dasharray="4 2 3 2 4"/></g>
<rect x="890.5" y="98.5" width="136" height="21" fill="url(#gb)" stroke="#cfd1d4"/>
<rect x="899" y="108.800" width="59" height="1.300" fill="#111"/>
<text x="959.4" y="113.4" textLength="38.6" lengthAdjust="spacingAndGlyphs" font-size="11" fill="#2e2e2e" >ByLayer</text>
<path d="M1017.1 107.0 h7 l-3.5 4 z" fill="#2e2e2e"/>
<rect x="1035.500" y="52.500" width="18" height="31" fill="none" stroke="#111" stroke-dasharray="2 1.500"/><rect x="1039.500" y="56.500" width="10" height="10" fill="#e8df7a" stroke="#333"/><circle cx="1044.500" cy="75.500" r="5" fill="#dfe6ee" stroke="#222" stroke-width="1.200"/><path d="M1048 71.500 l4.500 -5" stroke="#222" stroke-width="1.400"/>
<defs><radialGradient id="gsp"><stop offset="0" stop-color="#fff"/><stop offset=".5" stop-color="#eaf4fc" stop-opacity=".9"/><stop offset="1" stop-color="#cfe6f7" stop-opacity="0"/></radialGradient></defs><path d="M1056.20 64.45 L1066.70 63.00 L1056.20 61.55 Z" fill="#84bfeb"/><path d="M1056.20 61.55 L1045.20 63.00 L1056.20 64.45 Z" fill="#84bfeb"/><path d="M1057.31 63.93 L1063.59 54.19 L1055.09 62.07 Z" fill="#84bfeb"/><path d="M1055.09 62.07 L1051.70 68.36 L1057.31 63.93 Z" fill="#84bfeb"/><path d="M1057.63 62.75 L1054.38 52.66 L1054.77 63.25 Z" fill="#84bfeb"/><path d="M1054.77 63.25 L1057.85 72.36 L1057.63 62.75 Z" fill="#84bfeb"/><path d="M1055.27 64.11 L1063.86 69.43 L1057.13 61.89 Z" fill="#84bfeb"/><path d="M1057.13 61.89 L1051.60 59.14 L1055.27 64.11 Z" fill="#84bfeb"/><path d="M1056.70 64.36 L1061.84 60.95 L1055.70 61.64 Z" fill="#84bfeb"/><path d="M1055.70 61.64 L1050.56 65.05 L1056.70 64.36 Z" fill="#84bfeb"/><path d="M1057.60 63.38 L1057.49 58.17 L1054.80 62.62 Z" fill="#84bfeb"/><path d="M1054.80 62.62 L1054.91 67.83 L1057.60 63.38 Z" fill="#84bfeb"/><circle cx="1056.200" cy="63" r="4.500" fill="url(#gsp)"/>
<text x="1037" y="97.7" textLength="28" lengthAdjust="spacingAndGlyphs" font-size="11" fill="#2e2e2e" >Group</text>
<rect x="1071.5" y="50.5" width="23" height="21" fill="url(#gb)" stroke="#d6d8da"/>
<rect x="1071.5" y="74.5" width="23" height="21" fill="url(#gb)" stroke="#d6d8da"/>
<rect x="1071.5" y="98.5" width="23" height="21" fill="url(#gb)" stroke="#d6d8da"/>
<g fill="#333"><rect x="1075.0" y="54.0" width="1" height="1"/><rect x="1075.0" y="68.0" width="1" height="1"/><rect x="1077.0" y="54.0" width="1" height="1"/><rect x="1077.0" y="68.0" width="1" height="1"/><rect x="1079.0" y="54.0" width="1" height="1"/><rect x="1079.0" y="68.0" width="1" height="1"/><rect x="1081.0" y="54.0" width="1" height="1"/><rect x="1081.0" y="68.0" width="1" height="1"/><rect x="1083.0" y="54.0" width="1" height="1"/><rect x="1083.0" y="68.0" width="1" height="1"/><rect x="1075.0" y="56.0" width="1" height="1"/><rect x="1083.0" y="56.0" width="1" height="1"/><rect x="1075.0" y="58.0" width="1" height="1"/><rect x="1083.0" y="58.0" width="1" height="1"/><rect x="1075.0" y="60.0" width="1" height="1"/><rect x="1083.0" y="60.0" width="1" height="1"/><rect x="1075.0" y="62.0" width="1" height="1"/><rect x="1083.0" y="62.0" width="1" height="1"/><rect x="1075.0" y="64.0" width="1" height="1"/><rect x="1083.0" y="64.0" width="1" height="1"/><rect x="1075.0" y="66.0" width="1" height="1"/><rect x="1083.0" y="66.0" width="1" height="1"/></g><rect x="1077.5" y="56.5" width="4" height="4" fill="#e8df7a" stroke="#222" stroke-width="1"/><circle cx="1079.5" cy="64.7" r="2" fill="#f4f4f4" stroke="#222" stroke-width="1"/><path d="M1082 64 l7 -9 l2 1.500 l-7 9 z" fill="#e9c98a" stroke="#7a5a2a" stroke-width=".5"/><path d="M1082 64 l1.500 2 l-2.500 .5 z" fill="#d46a5a"/>
<g fill="#333"><rect x="1075.0" y="78.0" width="1" height="1"/><rect x="1075.0" y="92.0" width="1" height="1"/><rect x="1077.0" y="78.0" width="1" height="1"/><rect x="1077.0" y="92.0" width="1" height="1"/><rect x="1079.0" y="78.0" width="1" height="1"/><rect x="1079.0" y="92.0" width="1" height="1"/><rect x="1081.0" y="78.0" width="1" height="1"/><rect x="1081.0" y="92.0" width="1" height="1"/><rect x="1083.0" y="78.0" width="1" height="1"/><rect x="1083.0" y="92.0" width="1" height="1"/><rect x="1075.0" y="80.0" width="1" height="1"/><rect x="1083.0" y="80.0" width="1" height="1"/><rect x="1075.0" y="82.0" width="1" height="1"/><rect x="1083.0" y="82.0" width="1" height="1"/><rect x="1075.0" y="84.0" width="1" height="1"/><rect x="1083.0" y="84.0" width="1" height="1"/><rect x="1075.0" y="86.0" width="1" height="1"/><rect x="1083.0" y="86.0" width="1" height="1"/><rect x="1075.0" y="88.0" width="1" height="1"/><rect x="1083.0" y="88.0" width="1" height="1"/><rect x="1075.0" y="90.0" width="1" height="1"/><rect x="1083.0" y="90.0" width="1" height="1"/></g><rect x="1077.5" y="80.5" width="4" height="4" fill="#f4f4f4" stroke="#222" stroke-width="1"/><circle cx="1079.5" cy="88.7" r="2" fill="#6fb0e6" stroke="#222" stroke-width="1"/><path d="M1085 81.500 h5 M1087.500 79 v5 M1085 86.500 h5" stroke="#222" stroke-width="1"/>
<g fill="#333"><rect x="1075.0" y="102.0" width="1" height="1"/><rect x="1075.0" y="116.0" width="1" height="1"/><rect x="1077.0" y="102.0" width="1" height="1"/><rect x="1077.0" y="116.0" width="1" height="1"/><rect x="1079.0" y="102.0" width="1" height="1"/><rect x="1079.0" y="116.0" width="1" height="1"/><rect x="1081.0" y="102.0" width="1" height="1"/><rect x="1081.0" y="116.0" width="1" height="1"/><rect x="1083.0" y="102.0" width="1" height="1"/><rect x="1083.0" y="116.0" width="1" height="1"/><rect x="1075.0" y="104.0" width="1" height="1"/><rect x="1083.0" y="104.0" width="1" height="1"/><rect x="1075.0" y="106.0" width="1" height="1"/><rect x="1083.0" y="106.0" width="1" height="1"/><rect x="1075.0" y="108.0" width="1" height="1"/><rect x="1083.0" y="108.0" width="1" height="1"/><rect x="1075.0" y="110.0" width="1" height="1"/><rect x="1083.0" y="110.0" width="1" height="1"/><rect x="1075.0" y="112.0" width="1" height="1"/><rect x="1083.0" y="112.0" width="1" height="1"/><rect x="1075.0" y="114.0" width="1" height="1"/><rect x="1083.0" y="114.0" width="1" height="1"/></g><rect x="1077.5" y="104.5" width="4" height="4" fill="#e8df7a" stroke="#222" stroke-width="1"/><circle cx="1079.5" cy="112.7" r="2" fill="#f4f4f4" stroke="#222" stroke-width="1"/><path d="M1084 105 v10 l2.300 -2.300 l1.700 3.600 l1.500 -.7 l-1.700 -3.600 h3.200 z" fill="#dfe88a" stroke="#222" stroke-width=".8"/>
<path d="M1117.500 60 V69 M1145.500 60 V69 M1118 64.500 H1145" stroke="#333" stroke-width="1.200" fill="none"/><path d="M1118 64.500 l3 -2 v4 z M1145 64.500 l-3 -2 v4 z" fill="#333"/><rect x="1117.500" y="71.500" width="28" height="5" rx="1" fill="#f2c433" stroke="#c8961a"/><path d="M1120 72 v2 M1123 72 v2 M1126 72 v2 M1129 72 v2 M1132 72 v2 M1135 72 v2 M1138 72 v2 M1141 72 v2 M1144 72 v2" stroke="#a87a10" stroke-width=".6"/>
<text x="1110.5" y="97.7" textLength="40.5" lengthAdjust="spacingAndGlyphs" font-size="11" fill="#2e2e2e" >Measure</text>
<path d="M1128.5 103.0 h5 l-2.5 3 z" fill="#2e2e2e"/>
<rect x="1164.5" y="50.5" width="23" height="21" fill="url(#gb)" stroke="#d6d8da"/>
<rect x="1164.5" y="74.5" width="23" height="21" fill="url(#gb)" stroke="#d6d8da"/>
<rect x="1164.5" y="98.5" width="23" height="21" fill="url(#gb)" stroke="#d6d8da"/>
<rect x="1168.500" y="54.500" width="8" height="11" fill="#7fc05a" stroke="#3a7a22"/><path d="M1174 57 v10 l2.300 -2.300 l1.700 3.600 l1.500 -.7 l-1.700 -3.600 h3.200 z" fill="#fff" stroke="#222" stroke-width=".8"/><path d="M1183 53 l-3 4.500 h2.500 l-1.500 4 l4.500 -5.500 h-2.500 l2 -3 z" fill="#f4b52a" stroke="#c07a10" stroke-width=".4"/>
<path d="M1172 82 a4 4 0 1 0 3 6" fill="none" stroke="#555" stroke-width="1"/><rect x="1172.500" y="78.500" width="7" height="7" fill="#7fc05a" stroke="#3a7a22"/><path d="M1178 82 v10 l2.300 -2.300 l1.700 3.600 l1.500 -.7 l-1.700 -3.600 h3.200 z" fill="#fff" stroke="#222" stroke-width=".8"/>
<rect x="1170.500" y="102.500" width="10" height="13" rx="1" fill="#f6f6f6" stroke="#444"/><rect x="1172" y="104" width="7" height="2.500" fill="#555"/><path d="M1172.500 108.500 h1.500 M1175 108.500 h1.500 M1177.500 108.500 h1.500 M1172.500 111 h1.500 M1175 111 h1.500 M1177.500 111 h1.500 M1172.500 113.500 h1.500 M1175 113.500 h1.500 M1177.500 113.500 h1.500" stroke="#444" stroke-width="1.200"/>
<rect x="1205.500" y="55.500" width="19" height="24" rx="1.500" fill="#b9b1a3" stroke="#5a544a"/><path d="M1210 56 q0 -3.500 5 -3.500 q5 0 5 3.500 z" fill="#f2f2f2" stroke="#555" stroke-width=".8"/><path d="M1212.500 62.500 H1224 L1229.500 68 V82.500 H1212.500 Z" fill="url(#gsh)" stroke="#444"/><path d="M1224 62.500 V68 H1229.500" fill="none" stroke="#444" stroke-width=".8"/>
<text x="1203.4" y="97.7" textLength="26.6" lengthAdjust="spacingAndGlyphs" font-size="11" fill="#2e2e2e" >Paste</text>
<path d="M1215.0 103.0 h5 l-2.5 3 z" fill="#2e2e2e"/>
<rect x="1243.5" y="50.5" width="23" height="21" fill="url(#gb)" stroke="#d6d8da"/>
<rect x="1243.5" y="74.5" width="23" height="21" fill="url(#gb)" stroke="#d6d8da"/>
<rect x="1243.5" y="98.5" width="23" height="21" fill="url(#gb)" stroke="#d6d8da"/>
<path d="M1248.500 54 L1258.500 64.500 M1261.500 54 L1251.500 64.500" stroke="#3a3a3a" stroke-width="2" stroke-linecap="round"/><ellipse cx="1250" cy="66" rx="2.600" ry="1.700" fill="#fff" stroke="#333" transform="rotate(-40 1250 66)"/><ellipse cx="1260" cy="66" rx="2.600" ry="1.700" fill="#fff" stroke="#333" transform="rotate(40 1260 66)"/>
<path d="M1248.500 78.500 h6 l2 2 v9 h-8 z" fill="#fafafa" stroke="#333"/><path d="M1252.500 81.500 h6 l3 3 v9 h-9 z" fill="url(#gsh)" stroke="#333"/>
<rect x="1249.0" y="102.5" width="11" height="13" fill="#f7f7f7" stroke="#444"/><rect x="1250.5" y="104" width="5" height="4.500" fill="#2f66b3"/><rect x="1256.5" y="104" width="2" height="4.500" fill="#9ab4d6"/><rect x="1250.5" y="110" width="4" height="3" fill="#c9d4e4"/><path d="M1254.5 113 l4 .3 l3.500 -2.800 l1.500 1.200 l-3 3.800 q-2 2.500 -4 1.300 z" fill="#d97a1c" stroke="#8c4a0c" stroke-width=".6"/><path d="M1262.0 110.5 l2.500 -2" stroke="#b5651d" stroke-width="1.600"/>
</svg>
<!-- CANVAS -->
<div id="canvas" class="abs" style="left:0;top:149px;width:1280px;height:720px;background:#ebecee">
<div class="abs" style="left:0;top:0;width:1280px;height:1px;background:#3e3e3e"></div>
<div class="abs" style="left:2px;top:1px;width:1276px;height:1px;background:#fcfcfc"></div>
<div class="abs" style="left:0;top:0;width:1px;height:720px;background:#8c8c8c"></div>
<div class="abs" style="left:1px;top:0;width:1px;height:720px;background:#3e3e3e"></div>
<div class="abs" style="left:2px;top:1px;width:1px;height:719px;background:#fcfcfc"></div>
<div class="abs" style="left:1278px;top:0;width:2px;height:720px;background:#fafafa"></div>
</div>
<svg id="cv" width="1280" height="984" viewBox="0 0 1280 984" style="left:0;top:0">
<!-- paper -->
<rect x="245" y="325" width="695" height="535" fill="#000"/>
<rect x="237.5" y="317.5" width="697" height="538" fill="#fff" stroke="#000" stroke-width="1"/>
<!-- printable area dashed -->
<g stroke="#000" stroke-width="1" fill="none" shape-rendering="crispEdges">
<line x1="253.5" y1="332.5" x2="918.5" y2="332.5" stroke-dasharray="16 8.63" stroke-dashoffset="8"/>
<line x1="253.5" y1="839.5" x2="918.5" y2="839.5" stroke-dasharray="16 8.63" stroke-dashoffset="8"/>
<line x1="253.5" y1="332.5" x2="253.5" y2="839.5" stroke-dasharray="16.3 9.05" stroke-dashoffset="8.15"/>
<line x1="918.5" y1="332.5" x2="918.5" y2="839.5" stroke-dasharray="16.3 9.05" stroke-dashoffset="8.15"/>
</g>
<!-- crosshair -->
<g stroke="#000" stroke-width="1" fill="none" shape-rendering="crispEdges">
<line x1="290" y1="619.5" x2="371" y2="619.5"/>
<line x1="330.5" y1="579" x2="330.5" y2="660"/>
<rect x="328.5" y="616.5" width="4" height="6"/>
</g>
<!-- red annotations -->
<g fill="#ed1c24" font-family="'Liberation Sans',sans-serif" font-weight="bold" font-size="32">
<text y="203.7"><tspan x="56.40" textLength="115.65" lengthAdjust="spacingAndGlyphs">Dashed</tspan> <tspan x="179.93" textLength="71.86" lengthAdjust="spacingAndGlyphs">lines</tspan> <tspan x="259.42" textLength="28.11" lengthAdjust="spacingAndGlyphs">in</tspan> <tspan x="296.90" textLength="18.39" lengthAdjust="spacingAndGlyphs">a</tspan> <tspan x="321.60" textLength="99.04" lengthAdjust="spacingAndGlyphs">layout</tspan> <tspan x="429.40" textLength="50.17" lengthAdjust="spacingAndGlyphs">tab</tspan> <tspan x="487.18" textLength="19.02" lengthAdjust="spacingAndGlyphs">=</tspan> <tspan x="514.40" textLength="55.68" lengthAdjust="spacingAndGlyphs">The</tspan> <tspan x="578.61" textLength="141.22" lengthAdjust="spacingAndGlyphs">printable</tspan> <tspan x="728.20" textLength="66.40" lengthAdjust="spacingAndGlyphs">area</tspan> <tspan x="803.40" textLength="31.85" lengthAdjust="spacingAndGlyphs">or</tspan> <tspan x="843.56" textLength="108.22" lengthAdjust="spacingAndGlyphs">printer</tspan> <tspan x="960.62" textLength="122.96" lengthAdjust="spacingAndGlyphs">margins</tspan> <tspan x="1091.40" textLength="41.34" lengthAdjust="spacingAndGlyphs">for</tspan> <tspan x="1143.10" textLength="18.09" lengthAdjust="spacingAndGlyphs">a</tspan></text>
<text y="248.7"><tspan x="55.77" textLength="85.82" lengthAdjust="spacingAndGlyphs">given</tspan> <tspan x="148.77" textLength="85.87" lengthAdjust="spacingAndGlyphs">sheet</tspan> <tspan x="242.85" textLength="57.20" lengthAdjust="spacingAndGlyphs">size</tspan> <tspan x="309.20" textLength="58.08" lengthAdjust="spacingAndGlyphs">and</tspan> <tspan x="375.40" textLength="16.61" lengthAdjust="spacingAndGlyphs">a</tspan> <tspan x="400.27" textLength="86.02" lengthAdjust="spacingAndGlyphs">given</tspan> <tspan x="493.10" textLength="230.39" lengthAdjust="spacingAndGlyphs">printer/plotter</tspan></text>
<text y="403.3"><tspan x="406.25" textLength="86.21" lengthAdjust="spacingAndGlyphs">Make</tspan> <tspan x="500.79" textLength="68.11" lengthAdjust="spacingAndGlyphs">sure</tspan> <tspan x="579.10" textLength="60.55" lengthAdjust="spacingAndGlyphs">that</tspan> <tspan x="649.21" textLength="110.88" lengthAdjust="spacingAndGlyphs">objects</tspan> <tspan x="770.30" textLength="60.55" lengthAdjust="spacingAndGlyphs">that</tspan></text>
<text y="448.3"><tspan x="407.30" textLength="48.40" lengthAdjust="spacingAndGlyphs">are</tspan> <tspan x="463.75" textLength="30.50" lengthAdjust="spacingAndGlyphs">in</tspan> <tspan x="501.59" textLength="102.87" lengthAdjust="spacingAndGlyphs">&quot;paper</tspan> <tspan x="614.01" textLength="104.44" lengthAdjust="spacingAndGlyphs">space&quot;</tspan> <tspan x="728.20" textLength="49.11" lengthAdjust="spacingAndGlyphs">are</tspan></text>
<text y="493.3"><tspan x="407.67" textLength="99.19" lengthAdjust="spacingAndGlyphs">within</tspan> <tspan x="515.10" textLength="85.11" lengthAdjust="spacingAndGlyphs">these</tspan> <tspan x="607.59" textLength="133.80" lengthAdjust="spacingAndGlyphs">margins.</tspan> <tspan x="748.63" textLength="22.18" lengthAdjust="spacingAndGlyphs">If</tspan> <tspan x="781.10" textLength="68.19" lengthAdjust="spacingAndGlyphs">they</tspan></text>
<text y="538.3"><tspan x="407.30" textLength="48.40" lengthAdjust="spacingAndGlyphs">are</tspan> <tspan x="463.87" textLength="59.44" lengthAdjust="spacingAndGlyphs">not,</tspan> <tspan x="536.00" textLength="66.79" lengthAdjust="spacingAndGlyphs">they</tspan> <tspan x="615.34" textLength="53.52" lengthAdjust="spacingAndGlyphs">will</tspan> <tspan x="675.74" textLength="53.69" lengthAdjust="spacingAndGlyphs">not</tspan></text>
<text y="583.3"><tspan x="405.07" textLength="154.75" lengthAdjust="spacingAndGlyphs">print/plot</tspan></text>
</g>
<g stroke="#ed1c24" stroke-width="5" fill="none" stroke-linecap="round" stroke-linejoin="round">
<path d="M192.500 286.300 L292.300 327.300"/>
<path d="M281 293.500 L292.800 327.500 L265.500 342.500"/>
<path d="M186.700 292 L252.300 623.500"/>
<path d="M270.5 580.5 L252.3 623.5 L219 617"/>
</g>
<!-- UCS icon -->
<g stroke="#1c3fc0" stroke-width="1" fill="none">
<path d="M16.5 767.5 L16.5 854.5 L66.5 854.5 Z"/>
<rect x="16.5" y="846.5" width="8" height="8"/>
<path d="M18.300 793 L24.400 799.400 L30.500 793 M24.400 799.400 L24.400 805.700"/>
<path d="M44.100 840 L56.700 852.800 M57.300 840 L44.100 852.800"/>
</g>
<!-- window controls -->
<g stroke="#5a5a5a" stroke-width="1.100" fill="#fafafa" stroke-linejoin="round">
<rect x="1217.300" y="164.200" width="11.200" height="4.200" rx="1"/>
<rect x="1240" y="158.500" width="8.700" height="8.700" rx="1"/><rect x="1237.300" y="160.700" width="9.800" height="9" rx="1"/>
<rect x="1240.300" y="163.300" width="3.800" height="3.800" fill="#9a9a9a" stroke="#666" stroke-width=".8"/>
<path d="M1257.300 159.800 h3.900 l1.500 1.900 l1.500 -1.900 h3.900 l-3.500 4.200 l3.500 4.200 h-3.900 l-1.500 -1.900 l-1.500 1.900 h-3.900 l3.500 -4.200 z"/>
</g>
</svg>
<!-- BOTTOM: layout tabs, command line, status bar -->
<svg id="bot" width="1280" height="124" viewBox="0 860 1280 124" style="left:0;top:860px" font-family="'Liberation Sans',sans-serif">
<defs>
<linearGradient id="gs" x1="0" y1="0" x2="0" y2="1"><stop offset="0" stop-color="#a2a2a2"/><stop offset=".5" stop-color="#868686"/><stop offset="1" stop-color="#6c6c6c"/></linearGradient>
<linearGradient id="gsb" x1="0" y1="0" x2="0" y2="1"><stop offset="0" stop-color="#c9c9c9"/><stop offset=".5" stop-color="#bebebe"/><stop offset="1" stop-color="#b0b0b0"/></linearGradient>
<linearGradient id="gso" x1="0" y1="0" x2="0" y2="1"><stop offset="0" stop-color="#c6e2ee"/><stop offset=".5" stop-color="#b4d9e8"/><stop offset="1" stop-color="#a2d2e6"/></linearGradient>
<linearGradient id="gsd" x1="0" y1="0" x2="0" y2="1"><stop offset="0" stop-color="#8c8c8c"/><stop offset="1" stop-color="#6a6a6a"/></linearGradient>
</defs>
<rect x="0" y="869" width="1280" height="17" fill="#d4d0c8"/>
<rect x="0" y="869" width="1280" height="1" fill="#55524c"/>
<rect x="0" y="869" width="2" height="17" fill="#8a8a8a"/>
<rect x="0" y="885.500" width="1280" height="2" fill="#f4f4f2"/>
<rect x="0" y="887.500" width="1280" height="3.500" fill="#7c7c7c"/>
<rect x="2.5" y="870.500" width="15" height="14" fill="#d4d0c8" stroke="#f6f5f2"/><path d="M17.5 870.500 V885 H2.5" fill="none" stroke="#8c8880"/>
<rect x="17.5" y="870.500" width="15" height="14" fill="#d4d0c8" stroke="#f6f5f2"/><path d="M32.5 870.500 V885 H17.5" fill="none" stroke="#8c8880"/>
<rect x="32.5" y="870.500" width="15" height="14" fill="#d4d0c8" stroke="#f6f5f2"/><path d="M47.5 870.500 V885 H32.5" fill="none" stroke="#8c8880"/>
<rect x="47.5" y="870.500" width="15" height="14" fill="#d4d0c8" stroke="#f6f5f2"/><path d="M62.5 870.500 V885 H47.5" fill="none" stroke="#8c8880"/>
<rect x="6" y="873" width="1.500" height="9" fill="#8a8782"/><path d="M13 873 v9 l-5 -4.500 z" fill="#8a8782"/>
<path d="M28 873 v9 l-5 -4.500 z" fill="#8a8782"/>
<path d="M37 873 v9 l5 -4.500 z" fill="#8a8782"/>
<path d="M51 873 v9 l5 -4.500 z" fill="#8a8782"/><rect x="56.500" y="873" width="1.500" height="9" fill="#8a8782"/>
<path d="M62.500 870 L67.500 884.500 H108 L111 878" fill="none" stroke="#222" stroke-width="1"/>
<path d="M106.500 870 L112.500 884.500 H165.500 L171.500 869.500 Z" fill="#fff" stroke="none"/><path d="M106.500 870 L112.500 884.500 H165.500 L171.500 870" fill="none" stroke="#111" stroke-width="1"/>
<path d="M168.500 878 L166 884.500 H219 L224 870" fill="none" stroke="#222" stroke-width="1"/>
<text x="74.6" y="881.3" textLength="27.6" lengthAdjust="spacingAndGlyphs" font-size="11" fill="#111" >Model</text>
<text x="120" y="881.3" textLength="36.5" lengthAdjust="spacingAndGlyphs" font-size="11" fill="#111" >Layout1</text>
<text x="175.3" y="881.3" textLength="37.5" lengthAdjust="spacingAndGlyphs" font-size="11" fill="#111" >Layout2</text>
<rect x="0" y="891" width="1280" height="68" fill="#000"/>
<rect x="0" y="891" width="16.500" height="66.500" fill="#c6c6c6"/><rect x="0" y="891" width="1" height="66.500" fill="#f0f0f0"/><rect x="0" y="957" width="16.500" height="1" fill="#6a6a6a"/>
<path d="M2 894.500 h11 M2 896.500 h11" stroke="#444" stroke-width="1" stroke-dasharray="1 1"/>
<rect x="17" y="940" width="1263" height="1" fill="#9c9c9c"/>
<text x="17.3" y="902.7" textLength="119.51" lengthAdjust="spacingAndGlyphs" font-family="'Liberation Mono',monospace" font-size="12" fill="#3ddfe6">Command: _.PSPACE</text>
<text x="17.3" y="917.6" textLength="435.86" lengthAdjust="spacingAndGlyphs" font-family="'Liberation Mono',monospace" font-size="12" fill="#3ddfe6">Command: Specify opposite corner or [Fence/WPolygon/CPolygon]:</text>
<text x="17.3" y="932.4" textLength="168.72" lengthAdjust="spacingAndGlyphs" font-family="'Liberation Mono',monospace" font-size="12" fill="#3ddfe6">Command: _.erase 1 found</text>
<text x="17.3" y="954.6" textLength="56.24" lengthAdjust="spacingAndGlyphs" font-family="'Liberation Mono',monospace" font-size="12" fill="#3ddfe6">Command:</text>
<rect x="0" y="959" width="1280" height="21" fill="url(#gs)"/>
<rect x="0" y="979.700" width="1280" height="4.300" fill="#efeeea"/>
<defs><linearGradient id="ghz" x1="0" y1="0" x2="1" y2="0"><stop offset="0" stop-color="#000" stop-opacity="0"/><stop offset="1" stop-color="#000" stop-opacity=".13"/></linearGradient></defs><rect x="0" y="959" width="171" height="21" fill="url(#ghz)"/><rect x="677" y="959" width="260" height="21" fill="url(#ghz)"/>
<text x="12.8" y="974.4" textLength="110.2" lengthAdjust="spacingAndGlyphs" font-size="12" fill="#111" >1.2164, 3.4794, 0.0000</text>
<rect x="171" y="959.500" width="38.5" height="20" fill="url(#gsb)"/>
<rect x="208.5" y="959.500" width="1" height="20" fill="#454545"/>
<text x="175" y="974" textLength="30.5" lengthAdjust="spacingAndGlyphs" font-size="12.4" fill="#111" >INFER</text>
<rect x="209.5" y="959.500" width="35.0" height="20" fill="url(#gsb)"/>
<rect x="243.5" y="959.500" width="1" height="20" fill="#454545"/>
<text x="212" y="974" textLength="28.5" lengthAdjust="spacingAndGlyphs" font-size="12.4" fill="#111" >SNAP</text>
<rect x="244.5" y="959.500" width="33.0" height="20" fill="url(#gsb)"/>
<rect x="276.5" y="959.500" width="1" height="20" fill="#454545"/>
<text x="246.8" y="974" textLength="26.2" lengthAdjust="spacingAndGlyphs" font-size="12.4" fill="#111" >GRID</text>
<rect x="277.5" y="959.500" width="45.0" height="20" fill="url(#gsb)"/>
<rect x="321.5" y="959.500" width="1" height="20" fill="#454545"/>
<text x="279.5" y="974" textLength="39.3" lengthAdjust="spacingAndGlyphs" font-size="12.4" fill="#111" >ORTHO</text>
<rect x="322.5" y="959.500" width="42.0" height="20" fill="url(#gsb)"/>
<rect x="363.5" y="959.500" width="1" height="20" fill="#454545"/>
<text x="325.5" y="974" textLength="35.3" lengthAdjust="spacingAndGlyphs" font-size="12.4" fill="#111" >POLAR</text>
<rect x="364.5" y="959.500" width="43.0" height="20" fill="url(#gso)"/>
<rect x="406.5" y="959.500" width="1" height="20" fill="#454545"/>
<text x="367" y="974" textLength="36.8" lengthAdjust="spacingAndGlyphs" font-size="12.4" fill="#0f4d78" >OSNAP</text>
<rect x="407.5" y="959.500" width="57.0" height="20" fill="url(#gsb)"/>
<rect x="463.5" y="959.500" width="1" height="20" fill="#454545"/>
<text x="410" y="974" textLength="50.3" lengthAdjust="spacingAndGlyphs" font-size="12.4" fill="#111" >3DOSNAP</text>
<rect x="464.5" y="959.500" width="50.0" height="20" fill="url(#gsb)"/>
<rect x="513.5" y="959.500" width="1" height="20" fill="#454545"/>
<text x="467" y="974" textLength="44.3" lengthAdjust="spacingAndGlyphs" font-size="12.4" fill="#111" >OTRACK</text>
<rect x="514.5" y="959.500" width="36.0" height="20" fill="url(#gsb)"/>
<rect x="549.5" y="959.500" width="1" height="20" fill="#454545"/>
<text x="517.5" y="974" textLength="29.3" lengthAdjust="spacingAndGlyphs" font-size="12.4" fill="#111" >DUCS</text>
<rect x="550.5" y="959.500" width="29.0" height="20" fill="url(#gsb)"/>
<rect x="578.5" y="959.500" width="1" height="20" fill="#454545"/>
<text x="553" y="974" textLength="22.5" lengthAdjust="spacingAndGlyphs" font-size="12.4" fill="#111" >DYN</text>
<rect x="579.5" y="959.500" width="30.0" height="20" fill="url(#gsb)"/>
<rect x="608.5" y="959.500" width="1" height="20" fill="#454545"/>
<text x="582.5" y="974" textLength="23.0" lengthAdjust="spacingAndGlyphs" font-size="12.4" fill="#111" >LWT</text>
<rect x="609.5" y="959.500" width="27.0" height="20" fill="url(#gsb)"/>
<rect x="635.5" y="959.500" width="1" height="20" fill="#454545"/>
<text x="612.5" y="974" textLength="20.5" lengthAdjust="spacingAndGlyphs" font-size="12.4" fill="#111" >TPY</text>
<rect x="636.5" y="959.500" width="21.0" height="20" fill="url(#gsb)"/>
<rect x="656.5" y="959.500" width="1" height="20" fill="#454545"/>
<text x="638.8" y="974" textLength="15.0" lengthAdjust="spacingAndGlyphs" font-size="12.4" fill="#111" >QP</text>
<rect x="657.5" y="959.500" width="19.5" height="20" fill="url(#gsb)"/>
<rect x="676" y="959.500" width="1" height="20" fill="#454545"/>
<text x="660" y="974" textLength="13.8" lengthAdjust="spacingAndGlyphs" font-size="12.4" fill="#111" >SC</text>
<rect x="170" y="959.500" width="1" height="20" fill="#5e5e5e"/>
<rect x="937.5" y="959.500" width="42.5" height="20" fill="url(#gsb)"/><rect x="979" y="959.500" width="1" height="20" fill="#555"/>
<text x="940.8" y="974" textLength="34.7" lengthAdjust="spacingAndGlyphs" font-size="12.4" fill="#111" >PAPER</text>
<rect x="980" y="959.500" width="21.5" height="20" fill="url(#gsb)"/><rect x="1000.5" y="959.500" width="1" height="20" fill="#555"/>
<rect x="1001.5" y="959.500" width="22.0" height="20" fill="url(#gsb)"/><rect x="1022.5" y="959.500" width="1" height="20" fill="#555"/>
<rect x="984.500" y="962.500" width="11" height="10.500" fill="#f4f4f4" stroke="#333"/><path d="M987.500 964.500 V971 H992.500 Z" fill="none" stroke="#222" stroke-width="1"/><rect x="983" y="975.500" width="15" height="1.500" rx=".7" fill="#444"/>
<rect x="1004.500" y="963.500" width="7" height="6.500" fill="#f4f4f4" stroke="#333"/><rect x="1012.500" y="963.500" width="7" height="6.500" fill="#f4f4f4" stroke="#333"/><rect x="1004" y="973.500" width="16" height="2" rx="1" fill="#444"/>
<rect x="1023.500" y="959.500" width="24" height="20" fill="url(#gsd)"/>
<rect x="1047.5" y="959.500" width="14.0" height="20" fill="#a4a4a4"/><rect x="1060.5" y="959.500" width="1" height="20" fill="#555"/>
<path d="M1056.500 966 v7 l-4 -3.500 z" fill="#b6b6b6"/>
<rect x="1061.5" y="959.500" width="21.5" height="20" fill="#a8a8a8"/><rect x="1082" y="959.500" width="1" height="20" fill="#555"/>
<rect x="1064.500" y="962.500" width="15" height="15" fill="none" stroke="#d2232a" stroke-width="1.200" stroke-dasharray="1.500 1.500"/><rect x="1068.500" y="966.500" width="11" height="11" fill="#d6e6f4" stroke="#2a5f94" stroke-width="1.400"/><rect x="1071" y="969" width="6" height="6" fill="#b4cfe8" stroke="#5a8ab8" stroke-width=".6"/><path d="M1064.500 962.500 l5 5 M1064.500 962.500 h4 M1064.500 962.500 v4" stroke="#1f4f80" stroke-width="1.300"/>
<rect x="1083" y="959.500" width="14" height="20" fill="#a4a4a4"/><rect x="1096" y="959.500" width="1" height="20" fill="#555"/>
<path d="M1087.500 966 v7 l4 -3.500 z" fill="#b6b6b6"/>
<rect x="1097" y="959.500" width="23" height="20" fill="#a6a6a6"/><rect x="1119" y="959.500" width="1" height="20" fill="#555"/>
<rect x="1120" y="959.500" width="21.5" height="20" fill="#a6a6a6"/><rect x="1140.5" y="959.500" width="1" height="20" fill="#555"/>
<path d="M1102 975 L1108 962.500 L1110.500 968 L1114.500 975 L1108 970.500 Z" fill="#f6f6f6" stroke="#444" stroke-width=".7"/><path d="M1111 968 a2.300 2.500 0 1 1 4.600 0 q0 1.500 -1 2.500 v2 h-2.600 v-2 q-1 -1 -1 -2.500 z" fill="#dff0ff" stroke="#3b8fd9" stroke-width=".8"/>
<path d="M1124 975 L1130 962.500 L1132.500 968 L1136.500 975 L1130 970.500 Z" fill="#bdbdbd" stroke="#8a8a8a" stroke-width=".7"/><path d="M1126 964 l5 4 M1134 963 l-5 6" stroke="#8f8f8f" stroke-width="1"/>
<rect x="1141.500" y="959.500" width="6.500" height="20" fill="url(#gsd)"/>
<rect x="1148" y="959.500" width="21.5" height="20" fill="#a6a6a6"/><rect x="1168.5" y="959.500" width="1" height="20" fill="#555"/>
<rect x="1169.5" y="959.500" width="21.5" height="20" fill="#a6a6a6"/><rect x="1190" y="959.500" width="1" height="20" fill="#555"/>
<rect x="1191" y="959.500" width="22" height="20" fill="#a6a6a6"/><rect x="1212" y="959.500" width="1" height="20" fill="#555"/>
<path d="M1163.35 967.72 L1165.11 967.87 L1165.11 970.13 L1163.35 970.28 L1162.69 971.87 L1163.82 973.23 L1162.23 974.82 L1160.87 973.69 L1159.28 974.35 L1159.13 976.11 L1156.87 976.11 L1156.72 974.35 L1155.13 973.69 L1153.77 974.82 L1152.18 973.23 L1153.31 971.87 L1152.65 970.28 L1150.89 970.13 L1150.89 967.87 L1152.65 967.72 L1153.31 966.13 L1152.18 964.77 L1153.77 963.18 L1155.13 964.31 L1156.72 963.65 L1156.87 961.89 L1159.13 961.89 L1159.28 963.65 L1160.87 964.31 L1162.23 963.18 L1163.82 964.77 L1162.69 966.13 Z" fill="#f6f6f6" stroke="#333" stroke-width="0.9" stroke-linejoin="round"/><circle cx="1158" cy="969" r="2.500" fill="#a6a6a6" stroke="#333" stroke-width="1.200"/><path d="M1166.500 972.500 v4.500 h-4.500 z" fill="#fff" stroke="#111" stroke-width=".5"/>
<path d="M1180 968 v-2.800 a3.200 3.200 0 0 1 6.400 0 v2" fill="none" stroke="#222" stroke-width="1.600"/><rect x="1172.500" y="968.500" width="11" height="7.500" rx="1" fill="#f2f2f2" stroke="#222"/><rect x="1177.500" y="970.500" width="1.300" height="3.500" fill="#222"/>
<rect x="1194.500" y="964.500" width="11" height="7" fill="#8f9aa8" stroke="#333"/><path d="M1196 963 v1.500 M1199 963 v1.500 M1202 963 v1.500 M1205 963 v1.500 M1196 972 v1.500 M1199 972 v1.500 M1202 972 v1.500" stroke="#333" stroke-width="1"/><path d="M1203 969.500 a2.800 3 0 1 1 5.600 0 q0 1.800 -1.300 3 v2 h-3 v-2 q-1.300 -1.200 -1.300 -3 z" fill="#ffd95e" stroke="#c98a14" stroke-width=".7"/>
<rect x="1213" y="959.500" width="32" height="20" fill="#7a7a7a"/><rect x="1216" y="961.500" width="23" height="16" fill="#b4b4b4"/><rect x="1216" y="961.500" width="23" height="1.500" fill="#666"/><rect x="1216" y="961.500" width="1.500" height="16" fill="#666"/>
<path d="M1225.2 973.5 C1225.2 971 1222.4 969.8 1222.4 966.7 A4.600 4.600 0 1 1 1231.6 966.7 C1231.6 969.8 1228.8 971 1228.8 973.5 Z" fill="url(#gbulb)" stroke="#4f4f4f" stroke-width=".9"/><rect x="1225.4" y="973.5" width="3.200" height="2.600" rx="1" fill="#f0f0f0" stroke="#444" stroke-width=".8"/>
<rect x="1245" y="959.500" width="12" height="20" fill="#a6a6a6"/><rect x="1256" y="959.500" width="1" height="20" fill="#555"/>
<path d="M1248.3 969.0 h6 l-3.0 4 z" fill="#111"/>
<rect x="1257" y="959.500" width="23" height="20" fill="#a6a6a6"/><rect x="1279" y="959.500" width="1" height="20" fill="#555"/>
<rect x="1260.500" y="962.500" width="13" height="12" fill="#fafafa" stroke="#333"/><rect x="1260.500" y="962.500" width="13" height="2.500" fill="#555"/>
</svg>
</div>
</body>
</html>
